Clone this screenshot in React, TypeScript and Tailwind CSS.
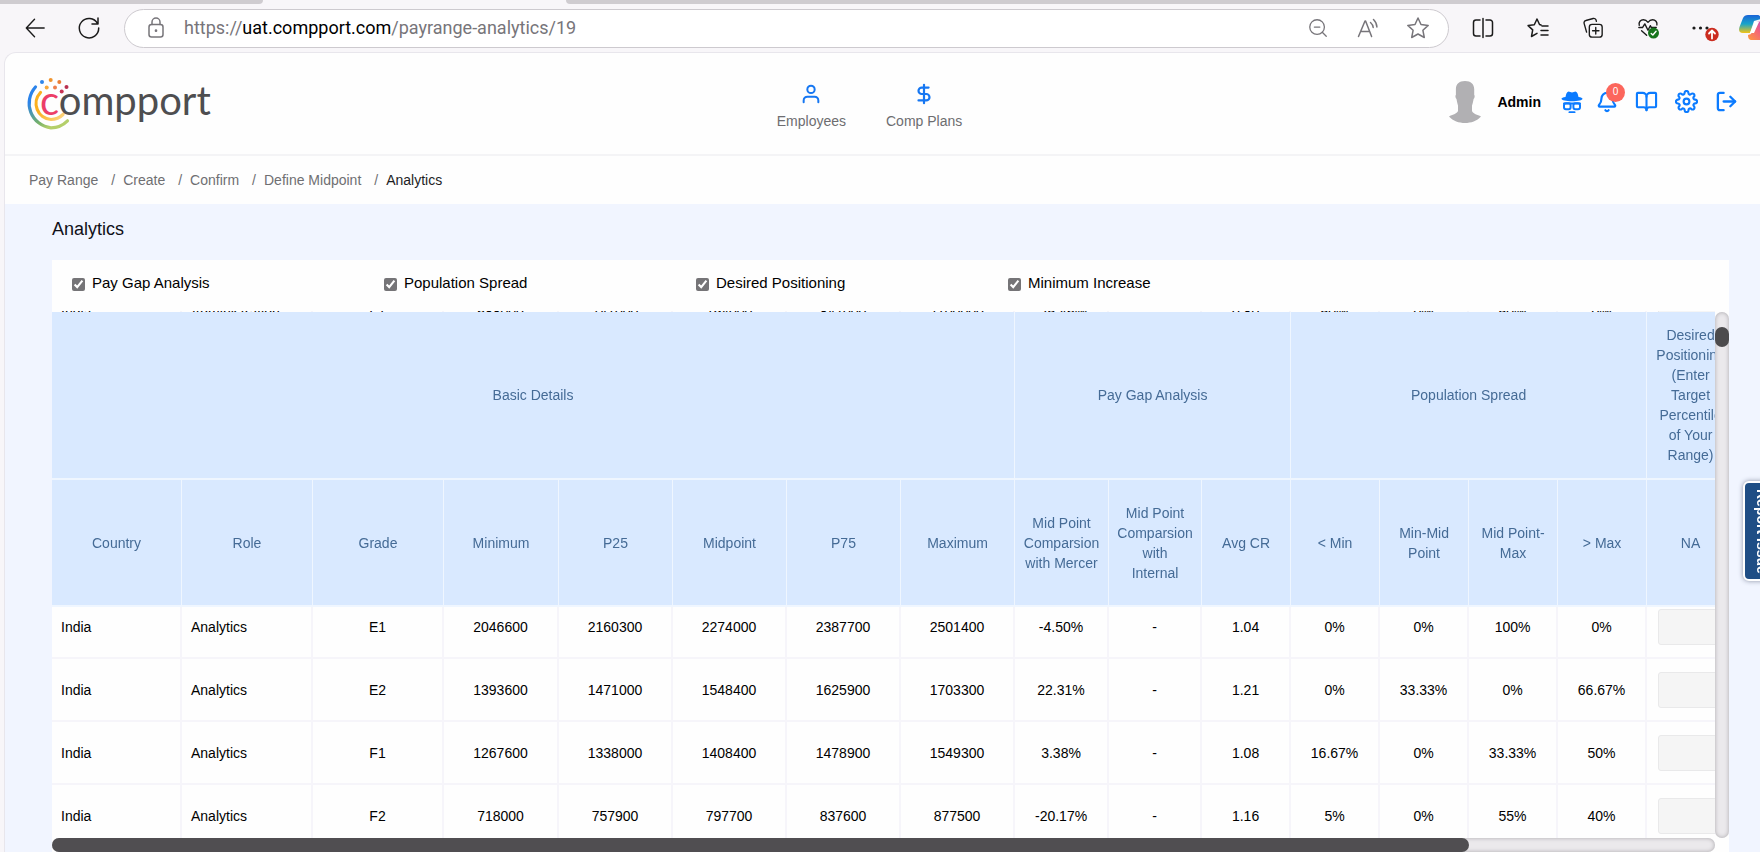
import { useLayoutEffect, useRef, type ReactNode } from "react";
import { Bell, BookOpen, DollarSign, LogOut, ZoomOut } from "lucide-react";
import { FiSettings, FiUser } from "react-icons/fi";

type Row = {
  country: string;
  role: string;
  grade: string;
  values: string[];
};

const basicColumns = ["Country", "Role", "Grade", "Minimum", "P25", "Midpoint", "P75", "Maximum"];

const metricColumns = [
  "Mid Point\nComparsion\nwith Mercer",
  "Mid Point\nComparsion\nwith\nInternal",
  "Avg CR",
  "< Min",
  "Min-Mid\nPoint",
  "Mid Point-\nMax",
  "> Max",
  "NA",
  "Employees",
  "Total Cost",
];

const rows: Row[] = [
  { country: "India", role: "Administration", grade: "F1", values: ["688000", "741000", "794000", "847000", "1100000", "-25.46%", "", "0.80", "50%", "0%", "50%", "0%"] },
  { country: "India", role: "Administration", grade: "F2", values: ["532000", "561600", "591100", "620700", "650200", "-18.02%", "-", "0.97", "40%", "20%", "20%", "20%"] },
  { country: "India", role: "Administration", grade: "G1", values: ["401300", "423600", "445900", "468200", "490500", "-9.75%", "-", "1.02", "25%", "25%", "50%", "0%"] },
  { country: "India", role: "Analytics", grade: "D1", values: ["3012400", "3179800", "3347100", "3514500", "3681800", "5.12%", "-", "0.99", "0%", "50%", "50%", "0%"] },
  { country: "India", role: "Analytics", grade: "D2", values: ["2489600", "2627900", "2766200", "2904500", "3042800", "1.90%", "-", "1.01", "0%", "50%", "0%", "50%"] },
  { country: "India", role: "Analytics", grade: "E1", values: ["2046600", "2160300", "2274000", "2387700", "2501400", "-4.50%", "-", "1.04", "0%", "0%", "100%", "0%"] },
  { country: "India", role: "Analytics", grade: "E2", values: ["1393600", "1471000", "1548400", "1625900", "1703300", "22.31%", "-", "1.21", "0%", "33.33%", "0%", "66.67%"] },
  { country: "India", role: "Analytics", grade: "F1", values: ["1267600", "1338000", "1408400", "1478900", "1549300", "3.38%", "-", "1.08", "16.67%", "0%", "33.33%", "50%"] },
  { country: "India", role: "Analytics", grade: "F2", values: ["718000", "757900", "797700", "837600", "877500", "-20.17%", "-", "1.16", "5%", "0%", "55%", "40%"] },
];

const filters = ["Pay Gap Analysis", "Population Spread", "Desired Positioning", "Minimum Increase"];
const crumbs = ["Pay Range", "Create", "Confirm", "Define Midpoint"];

function ToolButton({ label, children }: { label: string; children: ReactNode }) {
  return (
    <button type="button" aria-label={label} className="flex h-8 w-6 shrink-0 items-center justify-center">
      {children}
    </button>
  );
}

function Glyph({ children, size = 24 }: { children: ReactNode; size?: number }) {
  return (
    <svg
      width={size}
      height={size}
      viewBox="0 0 24 24"
      fill="none"
      stroke="currentColor"
      strokeWidth="1.5"
      strokeLinecap="round"
      strokeLinejoin="round"
      className="shrink-0 overflow-visible"
      aria-hidden="true"
    >
      {children}
    </svg>
  );
}

function BrowserBar() {
  return (
    <div className="bg-[#f8f6f9]">
      {/* bottom edge of the tab strip */}
      <div className="flex h-1">
        <div className="w-[263px] rounded-br bg-[#cfccd0]" />
        <div className="w-[303px]" />
        <div className="flex-1 rounded-bl bg-[#cfccd0]" />
      </div>
      <div className="flex h-12 items-center pl-[23px]">
        <div className="flex gap-[30px] text-[#1b1b1b]">
          <ToolButton label="Back">
            <Glyph size={22}>
              <path d="M22 12H2.500M11.500 2.500 2.500 12l9 9.500" />
            </Glyph>
          </ToolButton>
          <ToolButton label="Refresh">
            <Glyph>
              <path d="M20.500 7.500A9.700 9.700 0 1 0 21.700 12M21 2v6h-6" />
            </Glyph>
          </ToolButton>
        </div>
        <div className="ml-[23px] flex h-[39px] flex-1 items-center rounded-full border border-[#cdcacf] bg-white pl-5 pr-[18px] text-[#77757a]">
          <Glyph>
            <rect x="4" y="8.500" width="14" height="12.500" rx="2.500" />
            <path d="M7 8.500V6a4 4 0 0 1 8 0v2.500" />
            <circle cx="11" cy="14.700" r=".6" fill="currentColor" />
          </Glyph>
          <div className="ml-[15px] min-w-0 flex-1 truncate font-['Roboto',sans-serif] text-lg leading-7">
            https://<span className="text-black">uat.compport.com</span>/payrange-analytics/19
          </div>
          <div className="flex gap-[26px]">
            <ToolButton label="Zoom out">
              <ZoomOut size={22} strokeWidth={1.4} />
            </ToolButton>
            <ToolButton label="Read aloud">
              <Glyph>
                <path d="M2.500 20.500 9 5h.6l6 15.500M5 15.500h8.500M14.500 6.500c1.500 1.300 2.500 3 2.700 5M17.500 3.500c2 1.900 3.200 4.500 3.400 7.500" />
              </Glyph>
            </ToolButton>
            <ToolButton label="Add to favorites">
              <Glyph>
                <path d="m12 2 3 6.500 7.200.9-5.300 4.900 1.400 7.200L12 18l-6.300 3.500 1.400-7.200L1.800 9.400 9 8.500z" />
              </Glyph>
            </ToolButton>
          </div>
        </div>
        <div className="ml-[22px] flex gap-[31px] text-[#1b1b1b]">
          <ToolButton label="Split screen">
            <Glyph>
              <path d="M9 4H5a2.500 2.500 0 0 0-2.500 2.500v11A2.500 2.500 0 0 0 5 20h4M15 4h4a2.500 2.500 0 0 1 2.500 2.500v11A2.500 2.500 0 0 1 19 20h-4M12 2.500v19" />
            </Glyph>
          </ToolButton>
          <ToolButton label="Favorites">
            <Glyph>
              <path d="M13.500 8.500 11 3 8.300 8.800l-6.200.8 4.600 4.300-1.200 6.600 5.500-3.200M16 10h6M15 14.500h7M15 19h7M13.500 8.500l1.500.5" />
            </Glyph>
          </ToolButton>
          <ToolButton label="Collections">
            <Glyph size={22}>
              <rect x="8" y="8" width="14" height="14" rx="3" />
              <path d="M15 11.500v7M11.500 15h7M5 16.500 2.300 7a2.600 2.600 0 0 1 1.900-3.200l8-2.200a2.600 2.600 0 0 1 3.200 1.900l.3 1.200" />
            </Glyph>
          </ToolButton>
          <ToolButton label="Browser essentials">
            <Glyph size={22}>
              <path d="M2.500 9C1.500 5.500 4 3 7 3c2.200 0 3.800 1.200 5 2.800C13.200 4.200 14.800 3 17 3c3 0 5.300 2.500 4.700 5.700M2 11.500h4l2.500-4 3.500 7 2.500-5 1.200 2H21M5 15l5.500 5" />
              <circle cx="18" cy="17.500" r="6" fill="#16741c" stroke="none" />
              <path d="m15.500 18 1.800 1.700 3.500-4.200" stroke="#fff" />
            </Glyph>
          </ToolButton>
          <ToolButton label="Settings and more">
            <Glyph>
              <g fill="currentColor" stroke="none">
                <circle cx="3" cy="12" r="1.600" />
                <circle cx="9.500" cy="12" r="1.600" />
                <circle cx="16" cy="12" r="1.600" />
              </g>
              <circle cx="21" cy="18.500" r="6.700" fill="#cb2c20" stroke="none" />
              <path d="M21 22.500v-7.500M18 17.500l3-3 3 3" stroke="#fff" strokeWidth="1.800" />
            </Glyph>
          </ToolButton>
        </div>
        <button type="button" aria-label="Copilot" className="ml-6 h-8 w-[21px] shrink-0 overflow-hidden">
          <svg width="30" height="32" viewBox="0 0 30 32" aria-hidden="true">
            <defs>
              <linearGradient id="copilotCool" x1="0" y1="0" x2="0" y2="1">
                <stop offset="0" stopColor="#1a63d8" />
                <stop offset=".5" stopColor="#18a5c9" />
                <stop offset="1" stopColor="#f5c414" />
              </linearGradient>
              <linearGradient id="copilotWarm" x1="0" y1="1" x2="1" y2="0">
                <stop offset="0" stopColor="#ff9a3c" />
                <stop offset=".5" stopColor="#f2627b" />
                <stop offset="1" stopColor="#b04be0" />
              </linearGradient>
            </defs>
            <path d="M9 3h9c3 0 3.500 2 4 4l-7 2-4 12H4c-4 0-4.500-3-3.500-6L4 6c1-2 2.500-3 5-3z" fill="url(#copilotCool)" />
            <path d="M22 28h-9c-3 0-4-2-4-5l3-1 5-12 9-1c3 1 3.500 4 2.500 7L26 25c-1 2-2 3-4 3z" fill="url(#copilotWarm)" />
            <path d="m16 9 4 1-5 11h-4z" fill="#fff" />
          </svg>
        </button>
      </div>
    </div>
  );
}

function Logo() {
  return (
    <svg width="188" height="58" viewBox="0 0 188 58" role="img" aria-label="compport" className="ml-5 mt-1.5">
      <defs>
        <linearGradient id="ringOuter" x1="0" y1="0" x2=".5" y2="1">
          <stop offset=".3" stopColor="#2b83ea" />
          <stop offset=".8" stopColor="#74b06a" />
          <stop offset="1" stopColor="#b4cf6a" />
        </linearGradient>
        <linearGradient id="ringInner" x1="0" y1="0" x2="1" y2="1">
          <stop offset=".4" stopColor="#fbb01f" />
          <stop offset="1" stopColor="#fbd684" />
        </linearGradient>
      </defs>
      <g fill="none" strokeLinecap="round">
        <path d="M10.500 11A24.500 24.500 0 0 0 26 51.800a24 24 0 0 0 16.500-7" stroke="url(#ringOuter)" strokeWidth="3.200" />
        <path d="M15.500 16.500A16 16 0 0 0 26 43.500a17 17 0 0 0 12-5" stroke="url(#ringInner)" strokeWidth="3.200" />
      </g>
      <circle cx="17" cy="6" r="2" fill="#2f86ea" />
      <circle cx="25.700" cy="4" r="2" fill="#f0942e" />
      <circle cx="34.300" cy="6" r="2" fill="#ea7d35" />
      <circle cx="21.700" cy="11.500" r="2" fill="#f6a93c" />
      <circle cx="30" cy="11.500" r="2" fill="#ee7f4c" />
      <circle cx="41.500" cy="11" r="2" fill="#b9304f" />
      <circle cx="36.700" cy="15.500" r="2" fill="#c83453" />
      <text x="15" y="39" fontFamily="Lato, sans-serif" fontSize="40" fill="#4e4e50">
        <tspan fill="#ec3e68">c</tspan>ompport
      </text>
    </svg>
  );
}

function SiteHeader() {
  return (
    <header className="grid h-[103px] grid-cols-[1fr_auto_1fr] items-center border-b-2 border-[#f4f4f6] pb-1 pr-[22px]">
      <Logo />
      <nav className="-ml-1 mt-2.5 flex gap-10 text-sm text-[#6d6d70]">
        <a href="#employees" className="flex flex-col items-center gap-1.5">
          <FiUser size={22} className="text-[#1677f2]" strokeWidth={2.2} />
          <span className="leading-5">Employees</span>
        </a>
        <a href="#comp-plans" className="flex flex-col items-center gap-1.5">
          <DollarSign size={22} className="text-[#1677f2]" strokeWidth={2.4} />
          <span className="leading-5">Comp Plans</span>
        </a>
      </nav>
      <div className="flex items-center justify-end text-[#0b7bff]">
        <svg width="32" height="42" viewBox="0 0 32 42" fill="#b1b0b3" aria-hidden="true">
          <path d="M16 0c6 0 9 3 9.200 8v6c.8.300.6 3-.6 4-.5 3-1 5-1.600 6.500V30c1 3 5.500 3.500 9 5.500C28 40 22 42 16 42S4 40 0 35.500C3 33.500 8 33 9 30v-5.500C8.500 23 8 21 7.500 18c-1.200-1-1.400-3.700-.6-4V8C7 3 10 0 16 0z" />
        </svg>
        <span className="ml-4 text-sm font-bold text-black">Admin</span>
        <div className="ml-5 flex items-center gap-[17px]">
          <button type="button" aria-label="Proxy">
            <svg width="22" height="22" viewBox="0 0 22 22" fill="currentColor" aria-hidden="true">
              <path d="M7.500.5 11 1.500 14.500.5C16.500.8 17 3.500 17.500 6c2.500.4 4 1 4 1.800 0 1.400-4.500 2.500-10.500 2.500S.5 9.200.5 7.800C.5 7 2 6.400 4.500 6 5 3.500 5.500.8 7.500.5z" />
              <g fill="none" stroke="currentColor" strokeWidth="2" strokeLinecap="round">
                <rect x="3" y="12.300" width="6.600" height="6" rx="2" />
                <rect x="12.400" y="12.300" width="6.600" height="6" rx="2" />
                <path d="M3 12.500h16M8.500 21.300h5" />
              </g>
            </svg>
          </button>
          <button type="button" aria-label="Notifications" className="relative -ml-1">
            <Bell size={22} strokeWidth={2.4} />
            <span className="absolute -top-2 left-2.5 flex size-[19px] items-center justify-center rounded-full bg-[#fc665c] text-[10px] leading-none text-white">
              0
            </span>
          </button>
          <button type="button" aria-label="Guide">
            <BookOpen size={23} strokeWidth={2.2} />
          </button>
          <button type="button" aria-label="Settings">
            <FiSettings size={23} strokeWidth={2.2} />
          </button>
          <button type="button" aria-label="Log out">
            <LogOut size={23} strokeWidth={2.4} />
          </button>
        </div>
      </div>
    </header>
  );
}

function Breadcrumbs() {
  return (
    <nav aria-label="Breadcrumb" className="flex h-12 items-center gap-2 pb-px pl-6 text-sm text-[#6f6f72]">
      {crumbs.map((crumb) => (
        <div key={crumb} className="flex gap-2">
          <a href="#crumb">{crumb}</a>
          <span className="pl-[5px]">/</span>
        </div>
      ))}
      <span className="text-[#1d1d1f]">Analytics</span>
    </nav>
  );
}

function Head({ label, span }: { label: string; span: number }) {
  return (
    <th colSpan={span} className="whitespace-pre-line border-b-2 border-r border-[#eff6ff] p-0 text-center font-normal">
      {label}
    </th>
  );
}

function PayRangeTable() {
  const scroller = useRef<HTMLDivElement>(null);

  // Open on the Analytics rows.
  useLayoutEffect(() => {
    if (scroller.current) scroller.current.scrollTop = 326;
  }, []);

  return (
    <div className="grid grid-cols-[minmax(0,1fr)_14px] grid-rows-[527px_14px]">
      <div ref={scroller} className="overflow-auto pt-px [scrollbar-width:none]">
        <table className="w-[1891px] table-fixed border-separate border-spacing-0 text-sm leading-5">
          <colgroup>
            <col className="w-[130px]" />
            <col span={2} className="w-[131px]" />
            <col className="w-[115px]" />
            <col span={4} className="w-[114px]" />
            <col className="w-[94px]" />
            <col className="w-[93px]" />
            <col span={5} className="w-[89px]" />
            <col className="w-[88px]" />
            <col span={2} className="w-[104px]" />
          </colgroup>
          <thead className="sticky top-0 z-10 bg-[#d9e9ff] text-[#456b96]">
            <tr className="h-[168px]">
              <Head span={8} label="Basic Details" />
              <Head span={3} label="Pay Gap Analysis" />
              <Head span={4} label="Population Spread" />
              <Head span={1} label={"Desired\nPositioning\n(Enter\nTarget\nPercentile\nof Your\nRange)"} />
              <Head span={2} label="Minimum Increase" />
            </tr>
            <tr className="h-[127px]">
              {basicColumns.concat(metricColumns).map((label) => (
                <Head key={label} span={1} label={label} />
              ))}
            </tr>
          </thead>
          <tbody className="text-black">
            {rows.map((row) => (
              <tr key={row.role + row.grade} className="h-[63px]">
                <td className="border-b-2 border-r-2 border-[#f6f5fa] px-[9px]">{row.country}</td>
                <td className="border-b-2 border-r-2 border-[#f6f5fa] px-[9px]">{row.role}</td>
                <td className="border-b-2 border-r-2 border-[#f6f5fa] text-center">{row.grade}</td>
                {row.values.map((value, i) => (
                  <td key={i} className="border-b-2 border-r-2 border-[#f6f5fa] text-center">
                    {value}
                  </td>
                ))}
                <td className="border-b-2 border-r-2 border-[#f6f5fa] pl-[11px] pr-2.5">
                  <input
                    type="text"
                    disabled
                    aria-label={`Target percentile for ${row.role} ${row.grade}`}
                    className="block h-9 w-full rounded-[3px] border border-[#e9e9ea] bg-[#f5f5f5]"
                  />
                </td>
                <td className="border-b-2 border-r-2 border-[#f6f5fa] text-center">-</td>
                <td className="border-b-2 border-[#f6f5fa] text-center">-</td>
              </tr>
            ))}
          </tbody>
        </table>
      </div>
      <div className="mt-px rounded-full bg-[#ebe9ec] pt-[15px] shadow-[inset_0_0_4px_#aaa8ac]">
        <div className="h-5 rounded-full bg-[#4c4b4d]" />
      </div>
      <div className="rounded-full bg-[#ebe9ec] shadow-[inset_0_0_4px_#aaa8ac]">
        <div className="h-full w-[85.2%] rounded-full bg-[#504e51]" />
      </div>
    </div>
  );
}

export default function App() {
  return (
    <div className="h-screen overflow-hidden bg-[#f8f6f9] font-['Liberation_Sans',Arial,sans-serif]">
      <BrowserBar />
      <div className="ml-1 rounded-tl-xl border-l border-t border-[#e8e6ec] bg-[#fefefe]">
        <SiteHeader />
        <Breadcrumbs />
        <main className="bg-[#f1f5ff] pl-[47px] pr-[31px]">
          <h1 className="h-14 pt-[11px] text-lg leading-7 text-[#101018]">Analytics</h1>
          <section className="bg-[#fefefe]">
            <div className="flex h-[51px] items-start pl-5 pt-[11px]">
              {filters.map((filter) => (
                <label key={filter} className="flex w-[312px] items-center gap-[7px] text-[15px] leading-6 text-black">
                  <input type="checkbox" defaultChecked className="mt-0.5 size-[13px] accent-[#757477]" />
                  {filter}
                </label>
              ))}
            </div>
            <PayRangeTable />
          </section>
        </main>
      </div>
      <button
        type="button"
        className="fixed -right-5 top-[481px] z-20 flex h-[100px] w-[37px] items-center justify-center rounded-md border-2 border-white bg-[#1f4e85] text-sm font-bold text-white shadow-[0_0_5px_#8b93a5] [writing-mode:vertical-rl]"
      >
        Report Issue
      </button>
    </div>
  );
}
